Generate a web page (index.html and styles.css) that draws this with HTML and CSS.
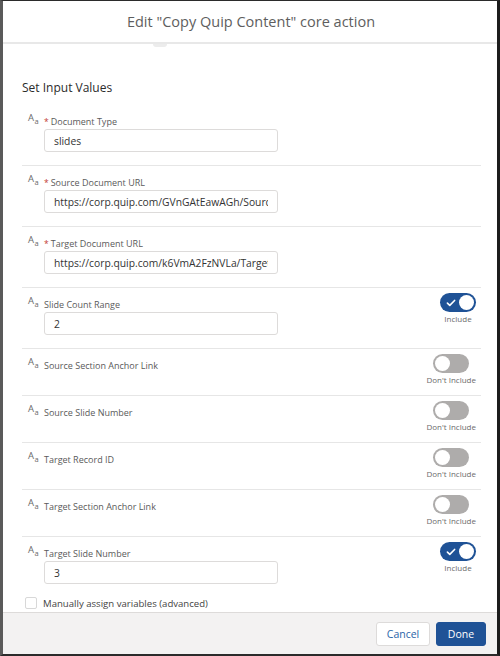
FILE: index.html
```html
<!DOCTYPE html>
<html>
<head>
<meta charset="utf-8">
<link rel="stylesheet" href="styles.css">
</head>
<body>
<div class="modal">
  <header class="modal-header">
    <h2 class="title">Edit "Copy Quip Content" core action</h2>
    <span class="bump"></span>
  </header>
  <main class="modal-body">
    <h3 class="section-title">Set Input Values</h3>

    <div class="row">
      <div class="field">
        <div class="label-line"><span class="aa">A<sub>a</sub></span><span class="req">*</span><span class="label">Document Type</span></div>
        <input class="input" type="text" value="slides" readonly>
      </div>
    </div>

    <div class="row">
      <div class="field">
        <div class="label-line"><span class="aa">A<sub>a</sub></span><span class="req">*</span><span class="label">Source Document URL</span></div>
        <input class="input" type="text" value="https://corp.quip.com/GVnGAtEawAGh/Source" readonly>
      </div>
    </div>

    <div class="row">
      <div class="field">
        <div class="label-line"><span class="aa">A<sub>a</sub></span><span class="req">*</span><span class="label">Target Document URL</span></div>
        <input class="input" type="text" value="https://corp.quip.com/k6VmA2FzNVLa/Target" readonly>
      </div>
    </div>

    <div class="row">
      <div class="field">
        <div class="label-line"><span class="aa">A<sub>a</sub></span><span class="label">Slide Count Range</span></div>
        <input class="input" type="text" value="2" readonly>
      </div>
      <div class="toggle-wrap">
        <span class="toggle on"><svg class="check" viewBox="0 0 12 10" width="10" height="8"><path d="M1.5 5.2 L4.5 8 L10.5 1.8" fill="none" stroke="#fff" stroke-width="2" stroke-linecap="round" stroke-linejoin="round"/></svg><span class="knob"></span></span>
        <span class="toggle-text">Include</span>
      </div>
    </div>

    <div class="row short">
      <div class="field">
        <div class="label-line"><span class="aa">A<sub>a</sub></span><span class="label">Source Section Anchor Link</span></div>
      </div>
      <div class="toggle-wrap">
        <span class="toggle"><span class="knob"></span></span>
        <span class="toggle-text">Don't Include</span>
      </div>
    </div>

    <div class="row short">
      <div class="field">
        <div class="label-line"><span class="aa">A<sub>a</sub></span><span class="label">Source Slide Number</span></div>
      </div>
      <div class="toggle-wrap">
        <span class="toggle"><span class="knob"></span></span>
        <span class="toggle-text">Don't Include</span>
      </div>
    </div>

    <div class="row short">
      <div class="field">
        <div class="label-line"><span class="aa">A<sub>a</sub></span><span class="label">Target Record ID</span></div>
      </div>
      <div class="toggle-wrap">
        <span class="toggle"><span class="knob"></span></span>
        <span class="toggle-text">Don't Include</span>
      </div>
    </div>

    <div class="row short">
      <div class="field">
        <div class="label-line"><span class="aa">A<sub>a</sub></span><span class="label">Target Section Anchor Link</span></div>
      </div>
      <div class="toggle-wrap">
        <span class="toggle"><span class="knob"></span></span>
        <span class="toggle-text">Don't Include</span>
      </div>
    </div>

    <div class="row last">
      <div class="field">
        <div class="label-line"><span class="aa">A<sub>a</sub></span><span class="label">Target Slide Number</span></div>
        <input class="input" type="text" value="3" readonly>
      </div>
      <div class="toggle-wrap">
        <span class="toggle on"><svg class="check" viewBox="0 0 12 10" width="10" height="8"><path d="M1.5 5.2 L4.5 8 L10.5 1.8" fill="none" stroke="#fff" stroke-width="2" stroke-linecap="round" stroke-linejoin="round"/></svg><span class="knob"></span></span>
        <span class="toggle-text">Include</span>
      </div>
    </div>

    <label class="manual"><span class="checkbox"></span><span>Manually assign variables (advanced)</span></label>
  </main>
  <footer class="modal-footer">
    <button class="btn cancel">Cancel</button>
    <button class="btn done">Done</button>
  </footer>
</div>
</body>
</html>
```

FILE: styles.css
```css
* { box-sizing: border-box; }
html, body { margin: 0; padding: 0; }
body {
  width: 500px;
  height: 656px;
  background: #fff;
  font-family: "Open Sans", "Liberation Sans", sans-serif;
  color: #3e3e3c;
  overflow: hidden;
}
.modal {
  width: 500px;
  height: 656px;
  border-top: 1px solid #2b2b2b;
  border-left: 3px solid #5a5a5a;
  border-right: 3px solid #1c1c1c;
  border-bottom: 2px solid #2b2b2b;
  display: flex;
  flex-direction: column;
  background: #fff;
  overflow: hidden;
}
.modal-header {
  position: relative;
  height: 43px;
  flex: none;
  border-bottom: 2px solid #e8e8e8;
  display: flex;
  align-items: center;
  justify-content: center;
}
.title {
  margin: 0 0 0 2px;
  font-size: 14.5px;
  font-weight: 400;
  color: #5e5e5e;
}
.bump {
  position: absolute;
  left: 150px;
  bottom: -5px;
  width: 14px;
  height: 3px;
  border-radius: 0 0 4px 4px;
  background: #ececec;
}
.modal-body {
  flex: 1;
  padding: 35px 16px 0 19px;
  overflow: hidden;
}
.section-title {
  margin: 0 0 8px 0;
  font-size: 12px;
  font-weight: 400;
  color: #2b2b2b;
  line-height: 18px;
}
.row {
  display: flex;
  justify-content: space-between;
  border-bottom: 1px solid #e6e6e6;
  padding: 5px 5px 13px 6px;
}
.row.short { padding-bottom: 10px; }
.row.last { border-bottom: none; padding-bottom: 11px; }
.field { display: flex; flex-direction: column; padding-top: 5px; }
.label-line {
  display: flex;
  align-items: center;
  height: 12px;
  font-size: 9px;
  color: #555;
}
.aa {
  width: 16px;
  font-size: 9.5px;
  color: #6a6a6a;
  line-height: 1;
  margin-top: -3px;
}
.aa sub { font-size: 7.5px; vertical-align: -3px; margin-left: 0.5px; }
.req { color: #c23934; margin-right: 2px; font-size: 8.5px; }
.label { color: #5a5a5a; }
.input {
  display: block;
  margin: 2px 0 0 16px;
  width: 234px;
  height: 23px;
  border: 1px solid #dddbda;
  border-radius: 3px;
  padding: 0 9px;
  font-family: inherit;
  font-size: 10.3px;
  line-height: 21px;
  color: #333;
  background: #fff;
  outline: none;
}
.toggle-wrap {
  display: flex;
  flex-direction: column;
  align-items: center;
}
.toggle {
  position: relative;
  width: 36px;
  height: 19px;
  border-radius: 10px;
  background: #aeacab;
  display: block;
}
.toggle .knob {
  position: absolute;
  top: 2px;
  left: 2px;
  width: 15px;
  height: 15px;
  border-radius: 50%;
  background: #fff;
}
.toggle.on { background: #1f5296; }
.toggle.on .knob { left: 19px; }
.check { position: absolute; left: 6px; top: 6px; }
.toggle-text {
  margin-top: 1px;
  font-size: 8px;
  line-height: 11px;
  color: #6b6b6b;
  white-space: nowrap;
}
.manual {
  display: flex;
  align-items: center;
  height: 16px;
  gap: 6px;
  margin-left: 3px;
  font-size: 9.6px;
  color: #444;
}
.checkbox {
  width: 12px;
  height: 12px;
  border: 1px solid #d8d8d8;
  border-radius: 2px;
  background: #fff;
}
.modal-footer {
  flex: none;
  height: 42px;
  background: #f3f2f2;
  border-top: 1px solid #dddbda;
  display: flex;
  justify-content: flex-end;
  align-items: center;
  gap: 6px;
  padding-right: 11px;
}
.btn {
  height: 24px;
  border-radius: 3px;
  font-family: inherit;
  font-size: 10.5px;
  padding: 0;
  cursor: pointer;
}
.cancel {
  width: 54px;
  background: #fff;
  border: 1px solid #dddbda;
  color: #2a64a8;
}
.done {
  width: 50px;
  background: #1f5296;
  border: 1px solid #1f5296;
  color: #fff;
}
```
